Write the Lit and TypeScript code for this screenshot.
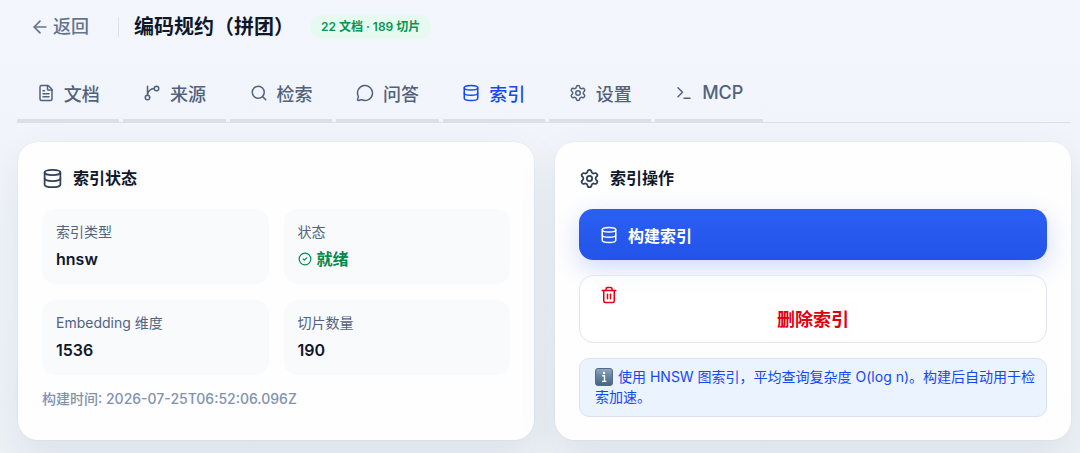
import { LitElement, html, css, svg } from "lit";
import { customElement, property, state } from "lit/decorators.js";

const ICONS: Record<string, unknown> = {
  back: svg`<path d="m12 19-7-7 7-7"/><path d="M19 12H5"/>`,
  file: svg`<path d="M6 22a2 2 0 0 1-2-2V4a2 2 0 0 1 2-2h8a2.4 2.4 0 0 1 1.704.706l3.588 3.588A2.4 2.4 0 0 1 20 8v12a2 2 0 0 1-2 2z"/><path d="M14 2v5a1 1 0 0 0 1 1h5"/><path d="M10 9H8"/><path d="M16 13H8"/><path d="M16 17H8"/>`,
  branch: svg`<path d="M15 6a9 9 0 0 0-9 9V3"/><circle cx="18" cy="6" r="3"/><circle cx="6" cy="18" r="3"/>`,
  search: svg`<path d="m21 21-4.34-4.34"/><circle cx="11" cy="11" r="8"/>`,
  chat: svg`<path d="M2.992 16.342a2 2 0 0 1 .094 1.167l-1.065 3.29a1 1 0 0 0 1.236 1.168l3.413-.998a2 2 0 0 1 1.099.092 10 10 0 1 0-4.777-4.719"/>`,
  database: svg`<ellipse cx="12" cy="5" rx="9" ry="3"/><path d="M3 5v14a9 3 0 0 0 18 0V5"/><path d="M3 12a9 3 0 0 0 18 0"/>`,
  settings: svg`<path d="M9.671 4.136a2.34 2.34 0 0 1 4.659 0 2.34 2.34 0 0 0 3.319 1.915 2.34 2.34 0 0 1 2.33 4.033 2.34 2.34 0 0 0 0 3.831 2.34 2.34 0 0 1-2.33 4.033 2.34 2.34 0 0 0-3.319 1.915 2.34 2.34 0 0 1-4.659 0 2.34 2.34 0 0 0-3.32-1.915 2.34 2.34 0 0 1-2.33-4.033 2.34 2.34 0 0 0 0-3.831A2.34 2.34 0 0 1 6.35 6.051a2.34 2.34 0 0 0 3.319-1.915"/><circle cx="12" cy="12" r="3"/>`,
  terminal: svg`<path d="M12 19h8"/><path d="m4 17 6-6-6-6"/>`,
  check: svg`<circle cx="12" cy="12" r="10"/><path d="m9 12 2 2 4-4"/>`,
  trash: svg`<path d="M10 11v6"/><path d="M14 11v6"/><path d="M19 6v14a2 2 0 0 1-2 2H7a2 2 0 0 1-2-2V6"/><path d="M3 6h18"/><path d="M8 6V4a2 2 0 0 1 2-2h4a2 2 0 0 1 2 2v2"/>`,
};

@customElement("line-icon")
export class LineIcon extends LitElement {
  @property() name = "";

  static styles = css`
    :host { display: block; flex: none; width: 18px; height: 18px; }
    .glyph {
      display: block; width: 100%; height: 100%; fill: none; stroke: currentColor;
      stroke-width: 2; stroke-linecap: round; stroke-linejoin: round;
    }
  `;

  render() {
    return html`<svg class="glyph" viewBox="0 0 24 24" aria-hidden="true">${ICONS[this.name]}</svg>`;
  }
}

const TABS = [
  { id: "docs", icon: "file", label: "文档" },
  { id: "sources", icon: "branch", label: "来源" },
  { id: "search", icon: "search", label: "检索" },
  { id: "qa", icon: "chat", label: "问答" },
  { id: "index", icon: "database", label: "索引" },
  { id: "settings", icon: "settings", label: "设置" },
  { id: "mcp", icon: "terminal", label: "MCP" },
];

const STATS = [
  { label: "索引类型", value: "hnsw" },
  { label: "状态", value: "就绪", ready: true },
  { label: "Embedding 维度", value: "1536" },
  { label: "切片数量", value: "190" },
];

@customElement("app-root")
export class AppRoot extends LitElement {
  @state() private active = "index";

  static styles = css`
    :host {
      display: block;
      min-height: 100vh;
      box-sizing: border-box;
      overflow: hidden;
      padding: 0 9px 12px 17px;
      background: linear-gradient(#f3f6fc, #edf2f7);
      color: #0f172b;
      font-family: Inter, "Noto Sans CJK SC", sans-serif;
    }
    button { font: inherit; cursor: pointer; }
    .header { display: flex; align-items: center; height: 54px; }
    .back {
      display: flex; align-items: center; gap: 3px; margin-left: 13px;
      color: #62748e; font-size: 18px; line-height: 24px; font-weight: 500; text-decoration: none;
    }
    .back line-icon { width: 20px; height: 20px; }
    .divider { width: 1px; height: 20px; margin: 0 15px 0 29px; background: #dbe1ec; }
    .title { margin: 0; font-size: 20px; line-height: 28px; font-weight: 700; }
    .badge {
      margin-left: 16px; padding: 0 11px; border-radius: 12px; background: #e6faf0;
      color: #079455; font-size: 12px; line-height: 24px; font-weight: 600;
    }
    .tabs { margin-top: 12px; border-bottom: 1px solid #dce0e6; }
    .tab-row { display: flex; gap: 4px; max-width: 746px; margin-bottom: -1px; }
    .tab {
      display: flex; flex: 1 1 auto; align-items: center; justify-content: center; gap: 9px;
      height: 57px; padding: 0; border: 0; border-bottom: 4px solid #dcdfe5; border-radius: 1px;
      background: none; color: #52627c; font-size: 18px; font-weight: 500;
    }
    .tab.active { color: #1447f5; }
    .cards { display: grid; grid-template-columns: repeat(2, minmax(0, 1fr)); gap: 21px; margin: 19px 0 0 1px; }
    .card {
      padding: 24px 24px 23px; border-radius: 20px; background: #fefefe;
      box-shadow: 0 0 0 1px rgba(15, 23, 42, 0.02), 0 16px 40px rgba(15, 40, 60, 0.08);
    }
    .card-title {
      display: flex; align-items: center; gap: 10px; margin: 0 0 19px;
      font-size: 16px; line-height: 24px; font-weight: 700;
    }
    .card-title line-icon { width: 21px; height: 21px; color: #314158; }
    .stats { display: grid; grid-template-columns: repeat(2, minmax(0, 1fr)); gap: 16px 15px; margin: 0; }
    .stat { padding: 12px 14px 13px; border-radius: 14px; background: #f8fafc; }
    .label { color: #52627f; font-size: 14px; line-height: 22px; }
    .value {
      display: flex; align-items: center; gap: 5px; margin: 4px 0 0;
      font-size: 16px; line-height: 24px; font-weight: 600;
    }
    .value line-icon { width: 14px; height: 14px; }
    .value.ready { color: #008a4e; font-weight: 700; }
    .built { margin: 14px 0 0; color: #8192ae; font-size: 14px; line-height: 20px; font-weight: 500; }
    .actions { display: flex; flex-direction: column; gap: 15px; }
    .build, .remove { box-sizing: border-box; border-radius: 14px; font-weight: 600; }
    .build {
      display: flex; align-items: center; gap: 10px; height: 51px; padding: 0 21px;
      border: 0; background: linear-gradient(#2b5ff3, #2353e8); color: #fff; font-size: 16px;
      box-shadow: 0 8px 24px rgba(50, 80, 240, 0.22);
    }
    .remove {
      padding: 10px 20px 6px; border: 1px solid #e2e5ea;
      background: rgba(255, 255, 255, 0.6); color: #e1000f; font-size: 18px; line-height: 32px;
    }
    .remove-text { display: block; }
    .note {
      margin: 0; padding: 8px 8px 9px 15px; border: 1px solid #d9e3f2; border-radius: 10px;
      background: #ebf3ff; color: #1447f5; font-size: 14px; line-height: 20px;
    }
    .info { width: 18px; height: 18px; margin-right: 5px; vertical-align: -4px; }
  `;

  render() {
    return html`
      <header class="header">
        <a class="back" href="#"><line-icon name="back"></line-icon>返回</a>
        <span class="divider"></span>
        <h1 class="title">编码规约（拼团）</h1>
        <span class="badge">22 文档 · 189 切片</span>
      </header>
      <nav class="tabs">
        <div class="tab-row">
          ${TABS.map((t) => html`
            <button class="tab ${t.id === this.active ? "active" : ""}" @click=${() => (this.active = t.id)}>
              <line-icon name=${t.icon}></line-icon><span>${t.label}</span>
            </button>`)}
        </div>
      </nav>
      <main class="cards">
        <section class="card">
          <h2 class="card-title"><line-icon name="database"></line-icon>索引状态</h2>
          <dl class="stats">
            ${STATS.map((s) => html`
              <div class="stat">
                <dt class="label">${s.label}</dt>
                <dd class="value ${s.ready ? "ready" : ""}">
                  ${s.ready ? html`<line-icon name="check"></line-icon>` : ""}${s.value}
                </dd>
              </div>`)}
          </dl>
          <p class="built">构建时间: 2026-07-25T06:52:06.096Z</p>
        </section>
        <section class="card">
          <h2 class="card-title"><line-icon name="settings"></line-icon>索引操作</h2>
          <div class="actions">
            <button class="build"><line-icon name="database"></line-icon>构建索引</button>
            <button class="remove"><line-icon name="trash"></line-icon><span class="remove-text">删除索引</span></button>
            <p class="note"><svg class="info" viewBox="0 0 18 18" role="img" aria-label="信息">
              <defs><linearGradient id="tile" x2="0" y2="1"><stop stop-color="#8fa9c2"/><stop offset=".45" stop-color="#6485a2"/><stop offset="1" stop-color="#49657f"/></linearGradient></defs>
              <rect x=".5" y=".5" width="17" height="17" rx="2.5" fill="url(#tile)" stroke="#536b82"/>
              <circle cx="9" cy="5" r="1.2" fill="#fff"/>
              <path d="M7.2 7.8h2.3v5.4M7 13.4h4.4" fill="none" stroke="#fff" stroke-width="1.4"/>
            </svg>使用 HNSW 图索引，平均查询复杂度 O(log n)。构建后自动用于检索加速。</p>
          </div>
        </section>
      </main>
    `;
  }
}
